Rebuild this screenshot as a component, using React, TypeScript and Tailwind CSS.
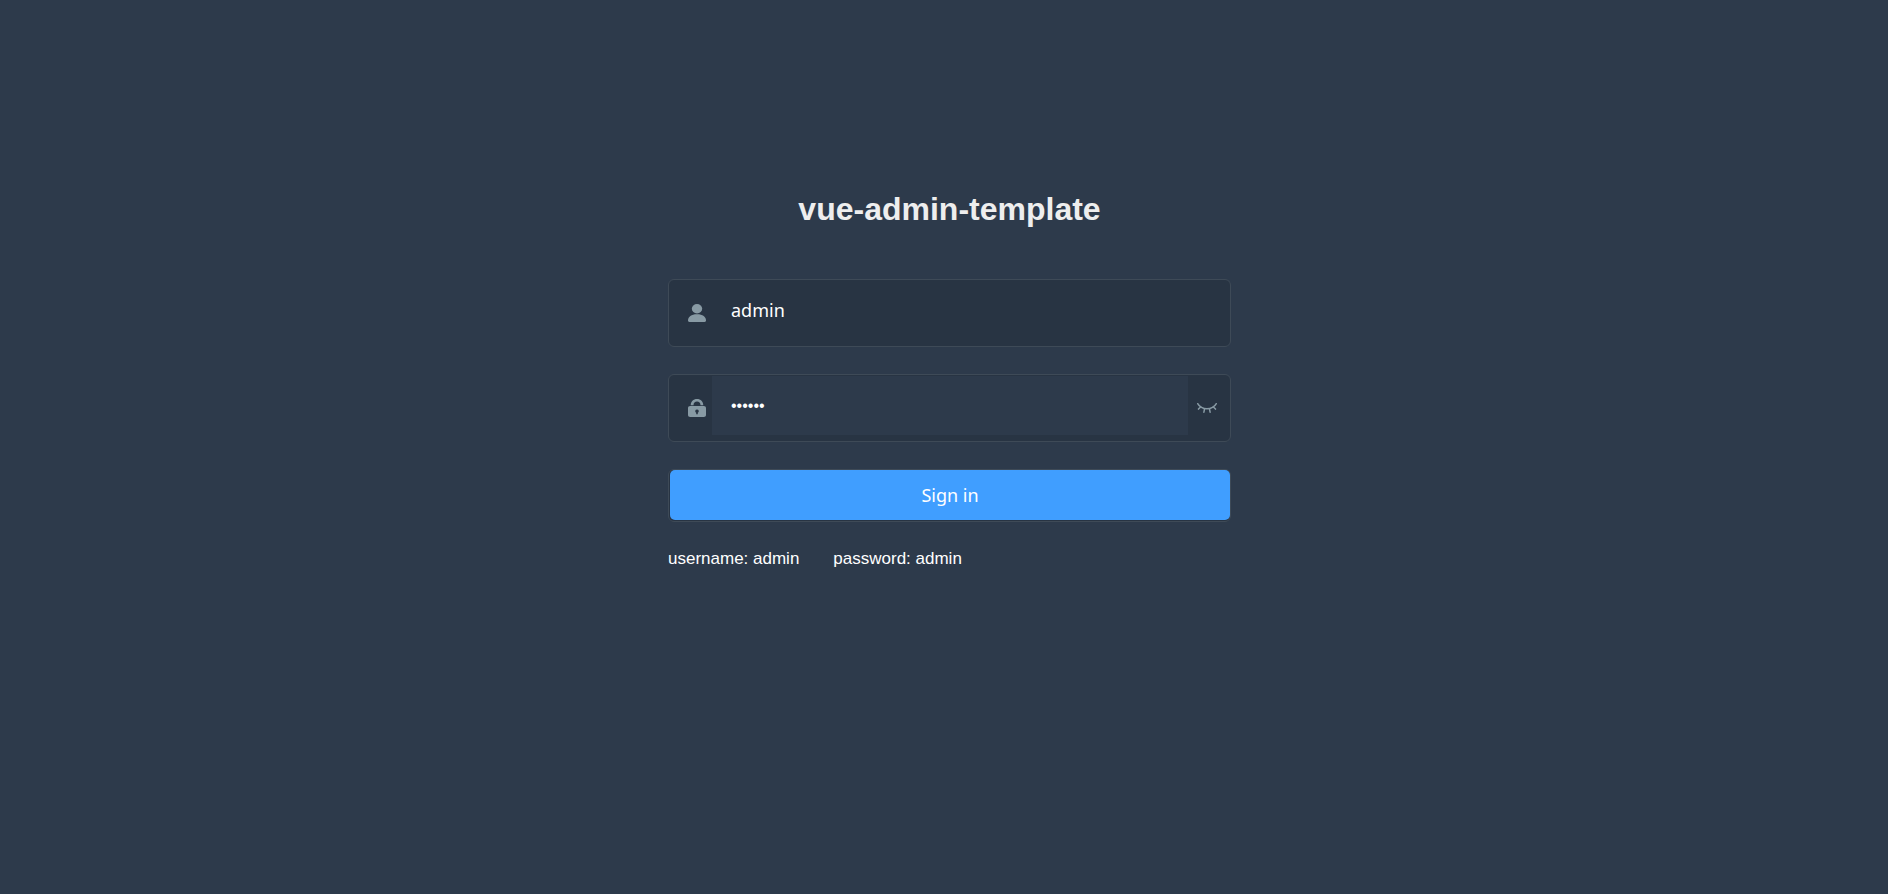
import React, { useState } from 'react';

const UserIcon: React.FC = () => (
  <svg viewBox="0 0 18 18" className="size-[18px]" fill="currentColor" aria-hidden="true">
    <ellipse cx="9" cy="4.7" rx="5.2" ry="4.7" />
    <path d="M0 16.6C0 13 3.2 10.3 9 10.3s9 2.7 9 6.3c0 .9-.5 1.4-1.4 1.4H1.4C.5 18 0 17.5 0 16.6z" />
  </svg>
);

const LockIcon: React.FC = () => (
  <svg viewBox="0 0 18 18" className="size-[18px]" fill="currentColor" aria-hidden="true">
    <path d="M2.7 6.2C2.7 2.6 5.300 0 9 0s6.300 2.600 6.300 6.200h-2.800C12.500 4 11.100 2.600 9 2.600S5.500 4 5.500 6.200z" />
    <path
      fillRule="evenodd"
      d="M2.2 7h13.6C17.2 7 18 7.800 18 9.200v6.600c0 1.400-.8 2.200-2.200 2.200H2.200C.8 18 0 17.200 0 15.800V9.200C0 7.800.8 7 2.200 7zM9 10.400a1.800 1.800 0 0 0-.8 3.400v1.500h1.600v-1.500a1.800 1.800 0 0 0-.8-3.400z"
    />
  </svg>
);

const EyeClosedIcon: React.FC = () => (
  <svg viewBox="0 0 20 10" className="h-[10px] w-[20px]" fill="none" stroke="currentColor" strokeWidth="1.5" strokeLinecap="round" aria-hidden="true">
    <path d="M.7.7C2.700 4.200 6 5.800 10 5.800s7.300-1.600 9.300-5.100" />
    <path d="M3.600 3.900 1.500 6.100M7.600 5.700 6.900 9.200M12.400 5.700l.7 3.500M16.400 3.900l2.100 2.200" />
  </svg>
);

const App: React.FC = () => {
  const [username, setUsername] = useState('admin');
  const [password, setPassword] = useState('123456');
  const [visible, setVisible] = useState(false);

  return (
    <div className="min-h-screen bg-[#2d3a4b] pl-[11px] font-['Liberation_Sans',Arial,sans-serif] text-white">
      <form className="mx-auto flex w-full max-w-[563px] flex-col pt-[190px]" onSubmit={(e) => e.preventDefault()}>
        <h1 className="mb-[51px] text-center text-[32px] leading-[38px] font-bold text-[#eeeeee]">vue-admin-template</h1>

        {/* Username */}
        <div className="mb-[27px] flex h-[68px] rounded-md border border-[#3e4a57] bg-[#283443]">
          <label htmlFor="username" aria-label="Username" className="flex w-[43px] items-center pl-[19px] text-[#889aa4]">
            <UserIcon />
          </label>
          <input
            id="username"
            type="text"
            aria-label="Username"
            autoComplete="off"
            value={username}
            onChange={(e) => setUsername(e.target.value)}
            className="h-[59px] min-w-0 flex-1 bg-transparent pr-4 pl-[19px] font-['Noto_Sans',sans-serif] text-[18px] outline-none"
          />
        </div>

        {/* Password */}
        <div className="mb-[27px] flex h-[68px] rounded-md border border-[#3e4a57] bg-[#283443]">
          <label htmlFor="password" aria-label="Password" className="flex w-[43px] items-center pl-[19px] text-[#889aa4]">
            <LockIcon />
          </label>
          <input
            id="password"
            type={visible ? 'text' : 'password'}
            aria-label="Password"
            autoComplete="off"
            value={password}
            onChange={(e) => setPassword(e.target.value)}
            className="mt-px h-[59px] min-w-0 flex-1 bg-[#2d3a4b] pr-4 pl-[19px] text-[16px] outline-none"
          />
          <button
            type="button"
            aria-label="Toggle password"
            onClick={() => setVisible(!visible)}
            className="flex w-[42px] items-center pl-[9px] text-[#889aa4]"
          >
            <EyeClosedIcon />
          </button>
        </div>

        <div className="mb-[27px] rounded-md border border-[#3e4a57] bg-[#283443] pb-px pl-px">
          <button type="submit" className="block h-[50px] w-full rounded-[5px] bg-[#409eff] font-['Noto_Sans',sans-serif] text-[18px]">
            Sign in
          </button>
        </div>

        <div className="flex gap-[34px] text-[17px] leading-5">
          <span>username: admin</span>
          <span>password: admin</span>
        </div>
      </form>
    </div>
  );
};

export default App;
